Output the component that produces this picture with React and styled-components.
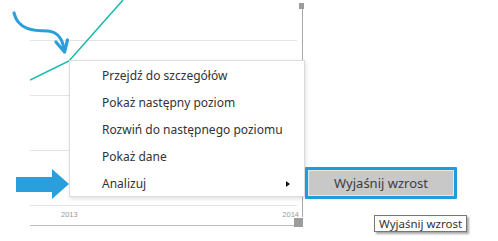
import React from "react";
import styled, { createGlobalStyle } from "styled-components";

const GlobalStyle = createGlobalStyle`
	html, body {
		margin: 0;
		padding: 0;
		background: #ffffff;
	}
	body {
		font-family: "Noto Sans", "Open Sans", sans-serif;
	}
`;

const Stage = styled.div`
	position: relative;
	width: 498px;
	height: 241px;
	overflow: hidden;
	background: #ffffff;
	padding-left: 30px;
	box-sizing: border-box;
`;

const Caption = styled.div`
	position: absolute;
	left: 42px;
	top: -20px;
	font-size: 13px;
	line-height: 18px;
	color: #222;
	white-space: nowrap;
`;

const Chart = styled.div`
	position: relative;
	width: 272px;
	height: 226px;
	display: flex;
	flex-flow: column;
	justify-content: flex-end;
	border-bottom: 1px solid #bdbdbd;
	box-sizing: border-box;

	/* selection edge on the right */
	&::before {
		content: "";
		position: absolute;
		left: 272px;
		top: 3px;
		width: 1px;
		height: 214px;
		background: #a8a8a8;
	}
	/* resize handle, bottom right */
	&::after {
		content: "";
		position: absolute;
		left: 264px;
		top: 218px;
		width: 9px;
		height: 9px;
		background: #9c9c9c;
	}
`;

const TopHandle = styled.div`
	position: absolute;
	left: 269px;
	top: 3px;
	width: 5px;
	height: 6px;
	background: #9c9c9c;
`;

const Plot = styled.svg`
	position: absolute;
	left: 0;
	top: 0;
`;

const Axis = styled.div`
	display: flex;
	justify-content: space-between;
	padding: 0 3px 6px 31px;
	font-size: 7.5px;
	color: #9a9a9a;
	font-family: "Liberation Sans", sans-serif;
`;

const Menu = styled.ul`
	position: absolute;
	left: 69px;
	top: 60px;
	width: 236px;
	height: 137px;
	margin: 0;
	padding: 1px 0;
	list-style: none;
	background: #fff;
	border: 1px solid #dcdcdc;
	box-sizing: border-box;
	box-shadow: 1px 2px 4px rgba(0, 0, 0, 0.12);
`;

const Item = styled.li`
	height: 27px;
	display: flex;
	align-items: center;
	justify-content: space-between;
	padding: 0 14px 0 32px;
	font-size: 12px;
	color: #333;
	white-space: nowrap;
`;

const Caret = styled.span`
	width: 0;
	height: 0;
	border-top: 3.5px solid transparent;
	border-bottom: 3.5px solid transparent;
	border-left: 4px solid #111;
`;

const Button = styled.div`
	position: absolute;
	left: 305px;
	top: 167px;
	width: 152px;
	height: 32px;
	box-sizing: border-box;
	border: 3px solid #1f9ddb;
	border-radius: 1px;
	display: flex;
`;

const ButtonFace = styled.div`
	flex: 1;
	display: flex;
	align-items: center;
	justify-content: center;
	background: #c8c8c8;
	border: 1px solid #e6e6e6;
	font-size: 13px;
	color: #3c3c3c;
`;

const Tooltip = styled.div`
	position: absolute;
	left: 374px;
	top: 215px;
	height: 17px;
	padding: 0 4px;
	box-sizing: border-box;
	display: flex;
	align-items: center;
	background: #fff;
	border: 1px solid #767676;
	box-shadow: 2px 2px 2px rgba(0, 0, 0, 0.35);
	font-size: 11.5px;
	color: #333;
	white-space: nowrap;
`;

const Overlay = styled.svg`
	position: absolute;
	left: ${(props) => props.x}px;
	top: ${(props) => props.y}px;
	overflow: visible;
`;

const grid = [40, 95, 150, 205];
const menu = [
	"Przejdź do szczegółów",
	"Pokaż następny poziom",
	"Rozwiń do następnego poziomu",
	"Pokaż dane",
];

const App = () => {
	return (
		<>
			<GlobalStyle />
			<Stage>
				<Caption>Zapytaj wykres, gdzie jest wzrost</Caption>
				<Chart>
					<Plot width="272" height="226">
						{grid.map((y) => (
							<line key={y} x1="0" x2="267" y1={y + 0.5} y2={y + 0.5} stroke="#e4e4e4" />
						))}
						<polyline
							points="0,80 39,61 93,0"
							fill="none"
							stroke="#14b8aa"
							strokeWidth="1.5"
						/>
					</Plot>
					<TopHandle />
					<Axis>
						<span>2013</span>
						<span>2014</span>
					</Axis>
				</Chart>

				<Overlay x={0} y={0} width="80" height="60">
					<path
						d="M14 13 C 18 30, 34 31, 48 31 C 58 32, 63 40, 64 50"
						fill="none"
						stroke="#2a9fdb"
						strokeWidth="3.2"
						strokeLinecap="round"
					/>
					<path
						d="M56 42 L64.5 52 L67.5 40"
						fill="none"
						stroke="#2a9fdb"
						strokeWidth="3.2"
						strokeLinecap="round"
						strokeLinejoin="round"
					/>
				</Overlay>

				<Menu>
					{menu.map((label) => (
						<Item key={label}>{label}</Item>
					))}
					<Item>
						Analizuj
						<Caret />
					</Item>
				</Menu>

				<Overlay x={16} y={167} width="53" height="32">
					<polygon points="0,10 36,10 36,2 53,17 36,32 36,25 0,25" fill="#2a9fdb" />
				</Overlay>

				<Button>
					<ButtonFace>Wyjaśnij wzrost</ButtonFace>
				</Button>
				<Tooltip>Wyjaśnij wzrost</Tooltip>
			</Stage>
		</>
	);
};

export default App;
